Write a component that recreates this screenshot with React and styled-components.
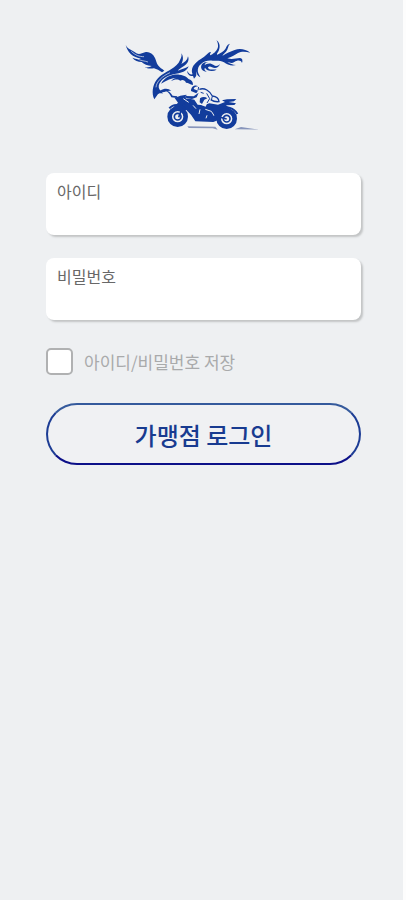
import React from 'react'
import styled, { createGlobalStyle } from 'styled-components'

function Logo() {
  return (
    <StyledLogo viewBox="27 27 474 279" role="img" aria-label="logo">
      <g fill="#123c9c">
        {/* left wing */}
        <path d="M29 44 C34 58 48 59 57 67 C67 76 77 70 87 67 C98 64 110 70 117 84 C121 92 121 99 126 106 C131 113 138 117 145 122 L138 127 C130 121 122 117 114 115 C104 116 95 117 86 112 C96 113 103 111 107 108 C94 107 84 103 77 96 C66 95 56 92 49 83 C58 87 67 89 75 86 C64 83 52 80 44 72 C36 64 32 55 29 44 Z" />
        {/* head and crest */}
        <path d="M115 208 C106 190 110 166 121 151 C132 135 150 128 165 118 C178 110 188 101 192 90 C196 83 198 77 196 70 C203 80 202 92 196 102 C206 97 214 91 216 79 C222 93 211 105 198 112 C192 116 188 119 186 122 C198 117 210 115 218 109 C213 121 202 127 188 130 C166 133 147 140 136 152 C127 162 126 171 131 179 C135 183 139 184 140 191 C133 188 127 190 124 195 Z" />
        <path d="M135 161 C148 139 170 132 190 134 C206 136 214 142 219 148 C227 150 231 156 231 165 C222 163 218 158 210 158 C207 151 200 148 193 152 C186 146 174 148 165 153 C172 145 178 143 184 143 C167 143 151 151 135 161 Z" />
        <path d="M133 182 C145 174 157 174 166 183 C154 180 148 188 137 187 Z" />
        <path d="M149 182 C161 183 165 190 170 197 L184 199 L182 204 L166 202 C162 193 158 187 149 182 Z" />
        {/* right wing */}
        <path d="M214 122 C217 130 223 135 230 133 C225 121 228 109 240 98 C249 89 262 84 273 73 C277 68 280 65 285 66 C280 75 282 78 289 73 C299 66 307 57 306 46 C306 40 304 35 301 31 C311 37 313 49 309 60 C306 68 301 72 304 74 C313 70 323 64 328 57 C332 51 331 45 342 41 C335 48 337 57 330 65 C325 71 319 74 320 77 C331 70 343 65 356 60 C372 54 389 58 403 68 C389 65 376 64 366 69 C356 75 346 81 334 85 C348 89 360 85 372 84 C379 85 381 91 378 99 C374 89 364 91 355 96 C348 101 340 98 334 96 C343 101 349 105 360 105 C347 109 333 104 324 97 C312 90 300 93 290 92 C278 90 264 93 256 101 C244 110 238 120 241 132 C242 139 237 143 234 146 L231 138 C221 139 213 132 214 122 Z" />
        <path d="M257 118 C251 104 262 94 278 96 C271 96 266 101 266 106 C272 99 285 98 293 105 C300 111 307 107 312 102 C308 114 297 117 288 112 C281 107 272 111 278 116 C284 120 296 117 302 119 C289 126 273 123 267 113 C263 119 268 122 272 125 C266 125 260 123 257 118 Z" />
        <path d="M239 101 L247 95 L250 106 C245 115 244 123 247 130 L253 142 C242 136 237 123 239 101 Z" />
        {/* motorcycle body */}
        <path d="M176 204 L193 197 L211 194 L214 205 L235 209 L245 224 L264 226 L280 220 L306 224 L327 216 L318 211 L333 208 L361 207 L354 214 L338 216 L360 220 L355 225 L330 226 L344 238 L322 242 L313 268 L292 276 L238 274 L225 254 L211 240 L196 242 L172 232 L186 218 Z" />
      </g>
      {/* rider */}
      <path d="M226 182 C224 169 237 161 248 169 L250 178 C263 172 280 181 290 197 C300 199 308 205 309 215 C294 216 283 209 277 211 L269 230 L257 226 L249 214 L237 207 L210 206 L209 197 L231 195 Z" fill="#eef0f2" />
      <g fill="#123c9c">
        <path d="M225 183 C225 170 236 163 247 169 C239 169 234 172 233 177 L246 182 L241 190 Z" />
        <path d="M209 198 L233 199 L248 188 L242 202 L228 207 L211 205 Z M252 205 C259 200 268 200 274 205 L265 209 L258 222 L251 217 Z" />
      </g>
      <g fill="none" stroke="#123c9c" strokeWidth="3">
        <path d="M250 178 C266 172 281 183 289 198 C299 199 308 205 309 215 C299 216 290 213 284 209" strokeWidth="4" />
        <path d="M254 187 L263 190 M272 190 L281 206 L273 219 M289 199 L286 210 M248 171 L246 181" />
      </g>
      <g fill="none" stroke="#eef0f2" strokeWidth="3">
        <path d="M202 206 L218 217 M231 226 L240 236 M252 238 L249 252 M268 238 L286 244 L295 258 M273 256 L270 265" />
        {/* feather gaps */}
        <path d="M46 64 C58 76 70 80 84 80 M62 85 C76 94 86 92 96 96 M120 172 C121 155 139 138 162 128" strokeWidth="2" />
      </g>
      {/* wheels */}
      <g fill="none" stroke="#123c9c">
        <circle cx="185" cy="260" r="24" strokeWidth="14" fill="#eef0f2" />
        <circle cx="185" cy="260" r="10" strokeWidth="5" />
        <circle cx="332" cy="266" r="24" strokeWidth="14" fill="#eef0f2" />
        <circle cx="332" cy="266" r="10" strokeWidth="5" />
        <path d="M204 220 L188 262 M295 257 L332 267" strokeWidth="5" />
        <path d="M160 235 C172 220 196 222 208 238 M313 236 C332 226 354 234 364 252" strokeWidth="6" />
      </g>
      {/* ground shadow */}
      <path d="M214 289 L298 290 L305 299 L290 295 L218 294 Z M356 298 L375 291 L430 299 Z" fill="#8795bb" />
    </StyledLogo>
  )
}

function App() {
  return (
    <>
      <GlobalStyle />
      <Page>
        <Logo />
        <LoginForm onSubmit={(e) => e.preventDefault()}>
          <Field>
            <FieldLabel htmlFor="userId">아이디</FieldLabel>
            <FieldInput id="userId" type="text" autoComplete="username" />
          </Field>
          <Field>
            <FieldLabel htmlFor="password">비밀번호</FieldLabel>
            <FieldInput id="password" type="password" autoComplete="current-password" />
          </Field>
          <SaveRow>
            <Checkbox id="save" type="checkbox" />
            <SaveLabel htmlFor="save">아이디/비밀번호 저장</SaveLabel>
          </SaveRow>
          <LoginButton type="submit">가맹점 로그인</LoginButton>
        </LoginForm>
      </Page>
    </>
  )
}

const GlobalStyle = createGlobalStyle`
* {
  box-sizing: border-box;
}
body {
  margin: 0;
  background: #eef0f2;
  font-family: "Noto Sans CJK KR", sans-serif;
}
`

const Page = styled.main`
display: flex;
flex-direction: column;
align-items: center;
min-height: 100vh;
padding: 39px 42px 40px 46px;
border-right: 3px solid #fdfdfd;
background: #eef0f2;
`

const StyledLogo = styled.svg`
width: 158px;
height: 93px;
margin-bottom: 41px;
`

const LoginForm = styled.form`
display: flex;
flex-direction: column;
gap: 23px;
width: 100%;
`

const Field = styled.div`
display: flex;
flex-direction: column;
height: 62px;
padding: 8px 11px;
border-radius: 8px;
background: #fff;
box-shadow: 2px 2px 2px #c2c4c5;
`

const FieldLabel = styled.label`
color: #686868;
font-size: 16px;
line-height: 20px;
`

const FieldInput = styled.input`
width: 100%;
height: 26px;
padding: 0;
border: none;
outline: none;
background: transparent;
font-family: inherit;
font-size: 16px;
`

const SaveRow = styled.div`
display: flex;
align-items: center;
gap: 11px;
padding: 5px 0;
`

const Checkbox = styled.input`
appearance: none;
width: 27px;
height: 27px;
margin: 0;
border: 2px solid #b0b1b2;
border-radius: 5px;
background: #fff;
  &:checked {
    background: #123c9c;
  }
`

const SaveLabel = styled.label`
color: #a9aaab;
font-size: 17px;
line-height: 20px;
`

const LoginButton = styled.button`
height: 62px;
padding: 0 20px;
border: 2px solid;
border-color: #355a9c #1c3c94 #0c1088;
border-radius: 31px;
background: #f0f1f3;
color: #183b90;
font-family: inherit;
font-size: 24px;
font-weight: 500;
cursor: pointer;
`

export default App
